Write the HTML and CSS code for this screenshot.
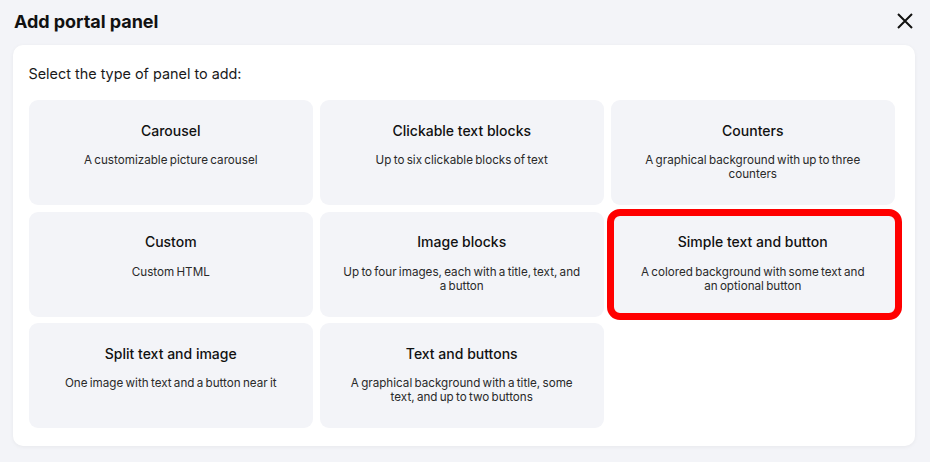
FILE: index.html
```html
<!DOCTYPE html>
<html lang="en">
<head>
<meta charset="utf-8">
<title>Add portal panel</title>
<link rel="stylesheet" href="styles.css">
</head>
<body>
<div class="dialog">
  <header class="head">
    <h1 class="head-title">Add portal panel</h1>
    <button class="close" aria-label="Close">
      <svg width="16" height="16" viewBox="0 0 16 16"><path d="M1 1L15 15M15 1L1 15" stroke="#111" stroke-width="2" fill="none"/></svg>
    </button>
  </header>
  <section class="panel">
    <p class="lead">Select the type of panel to add:</p>
    <div class="grid">
      <div class="card"><h2 class="card-title">Carousel</h2><p class="card-desc">A customizable picture carousel</p></div>
      <div class="card"><h2 class="card-title">Clickable text blocks</h2><p class="card-desc">Up to six clickable blocks of text</p></div>
      <div class="card"><h2 class="card-title">Counters</h2><p class="card-desc">A graphical background with up to three counters</p></div>
      <div class="card"><h2 class="card-title">Custom</h2><p class="card-desc">Custom HTML</p></div>
      <div class="card"><h2 class="card-title">Image blocks</h2><p class="card-desc">Up to four images, each with a title, text, and a button</p></div>
      <div class="card selected"><h2 class="card-title">Simple text and button</h2><p class="card-desc">A colored background with some text and an optional button</p></div>
      <div class="card"><h2 class="card-title">Split text and image</h2><p class="card-desc">One image with text and a button near it</p></div>
      <div class="card"><h2 class="card-title">Text and buttons</h2><p class="card-desc">A graphical background with a title, some text, and up to two buttons</p></div>
    </div>
  </section>
</div>
</body>
</html>
```
FILE: styles.css
```css
* { box-sizing: border-box; }
html, body { margin: 0; padding: 0; }
body {
  background: #f3f4f8;
  font-family: Inter, "Noto Sans", sans-serif;
  color: #111;
  width: 930px;
  height: 462px;
  overflow: hidden;
}
.dialog { display: flex; flex-direction: column; }
.head {
  height: 45px;
  display: flex;
  align-items: flex-start;
  justify-content: space-between;
  padding: 10px 17px 0 14px;
}
.head-title {
  margin: 0;
  font-size: 18px;
  line-height: 24px;
  font-weight: 700;
  letter-spacing: -0.05px;
}
.close {
  border: 0;
  background: none;
  padding: 0;
  margin-top: 3px;
  width: 16px;
  height: 16px;
  cursor: pointer;
}
.close svg { display: block; }
.panel {
  margin: 0 15px 0 13px;
  background: #fff;
  border-radius: 10px;
  padding: 19px 0 18px 15.5px;
  box-shadow: 0 1px 4px rgba(0,0,0,0.05);
}
.lead {
  margin: 0 0 16px;
  font-size: 14.4px;
  line-height: 20px;
  color: #1a1a1a;
}
.grid {
  display: grid;
  grid-template-columns: repeat(3, 284.5px);
  grid-auto-rows: 105px;
  gap: 6.5px;
}
.card {
  position: relative;
  background: #f3f4f8;
  border-radius: 9px;
  padding: 20.5px 23.2px 0;
  text-align: center;
}
.card-title {
  margin: 0;
  font-size: 14px;
  line-height: 20px;
  font-weight: 500;
  color: #111;
}
.card-desc {
  margin: 12.5px 0 0;
  font-size: 11.67px;
  line-height: 14px;
  word-spacing: -1px;
  color: #2a2a2a;
}
.card.selected::after {
  content: "";
  position: absolute;
  top: -3px;
  left: -4px;
  right: -7px;
  bottom: -3px;
  border: 7px solid #ff0000;
  border-radius: 13px;
  pointer-events: none;
}
```
